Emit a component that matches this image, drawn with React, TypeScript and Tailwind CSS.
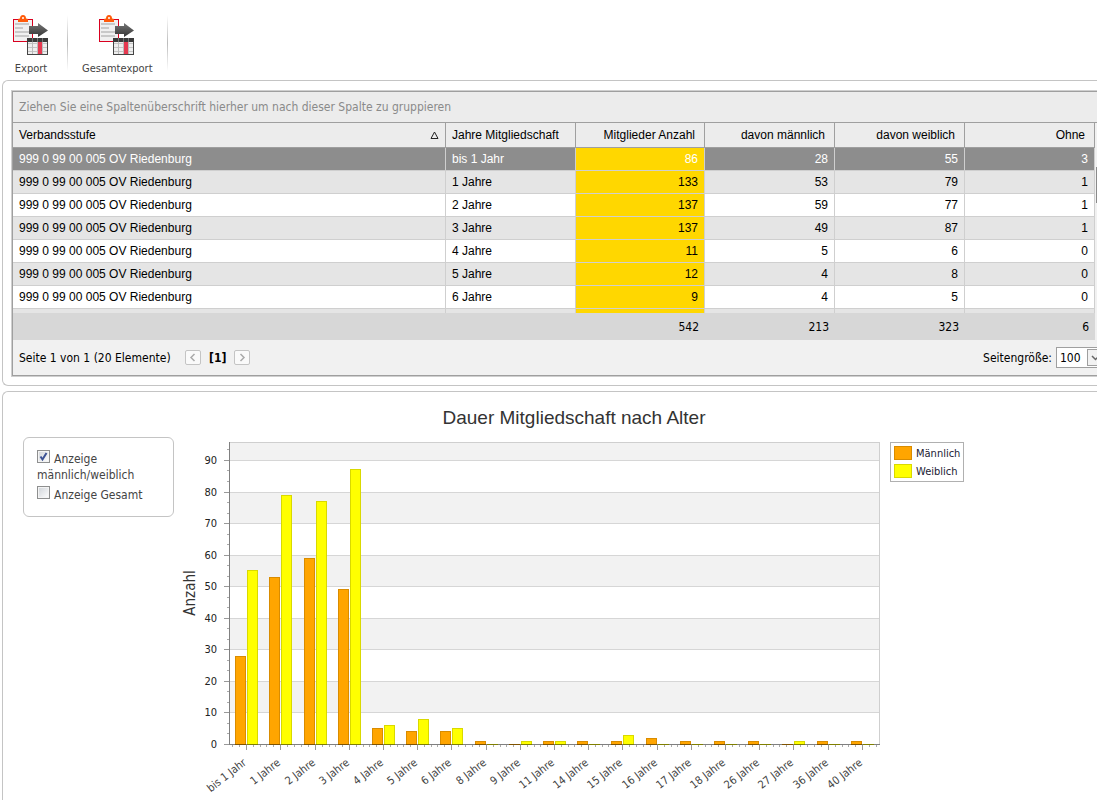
const rows = [
  { label: "bis 1 Jahr", values: [86, 28, 55, 3] },
  { label: "1 Jahre", values: [133, 53, 79, 1] },
  { label: "2 Jahre", values: [137, 59, 77, 1] },
  { label: "3 Jahre", values: [137, 49, 87, 1] },
  { label: "4 Jahre", values: [11, 5, 6, 0] },
  { label: "5 Jahre", values: [12, 4, 8, 0] },
  { label: "6 Jahre", values: [9, 4, 5, 0] },
];

const numberColumns = ["Mitglieder Anzahl", "davon männlich", "davon weiblich", "Ohne"];
const totals = [542, 213, 323, 6];

const chartData = [
  { label: "bis 1 Jahr", m: 28, w: 55 },
  { label: "1 Jahre", m: 53, w: 79 },
  { label: "2 Jahre", m: 59, w: 77 },
  { label: "3 Jahre", m: 49, w: 87 },
  { label: "4 Jahre", m: 5, w: 6 },
  { label: "5 Jahre", m: 4, w: 8 },
  { label: "6 Jahre", m: 4, w: 5 },
  { label: "8 Jahre", m: 1, w: 0 },
  { label: "9 Jahre", m: 0, w: 1 },
  { label: "11 Jahre", m: 1, w: 1 },
  { label: "14 Jahre", m: 1, w: 0 },
  { label: "15 Jahre", m: 1, w: 3 },
  { label: "16 Jahre", m: 2, w: 0 },
  { label: "17 Jahre", m: 1, w: 0 },
  { label: "18 Jahre", m: 1, w: 0 },
  { label: "26 Jahre", m: 1, w: 0 },
  { label: "27 Jahre", m: 0, w: 1 },
  { label: "36 Jahre", m: 1, w: 0 },
  { label: "40 Jahre", m: 1, w: 0 },
];

// plot area inside the chart svg
const left = 49;
const right = 699;
const top = 34;
const bottom = 336;
const step = (right - left) / 19;
const yOf = (value: number) => Math.round(bottom - value * 3.156);
const xOf = (index: number) => Math.round(left + step / 2 + index * step);

function ExportIcon() {
  return (
    <svg width="36" height="41" viewBox="0 0 36 41" aria-hidden="true">
      <defs>
        <linearGradient id="arrow" x1="0" y1="0" x2="0" y2="1">
          <stop offset="0" stopColor="#777" />
          <stop offset="1" stopColor="#333" />
        </linearGradient>
      </defs>
      <rect x="0.5" y="4.5" width="19" height="22" fill="#f0f0f0" stroke="#d9001f" />
      <path d="M2 9h14M2 13h8M2 17h14M2 21h14" stroke="#c9c9c9" strokeWidth="2" />
      <path d="M5 7V4.500q0-1 2-1 0-3.500 3-3.500t3 3.500q2 0 2 1V7z" fill="#ff5a0a" />
      <circle cx="10" cy="3" r="1" fill="#fff" />
      <path d="M16 11h9V8l10 7.500L25 22v-3h-9z" fill="url(#arrow)" />
      <rect x="14.500" y="23.500" width="20" height="16" fill="#eee" stroke="#444" />
      <path d="M15 28.500h19M15 32.500h19M15 36.500h19" stroke="#c4c4c4" />
      <path d="M19.500 24v15M24.500 24v15M29.500 24v15" stroke="#bbb" />
      <rect x="25" y="27" width="4" height="12" fill="#e63950" />
      <path d="M14 25h21" stroke="#3a3a3a" strokeWidth="4" />
      <path d="M19.500 23v4M24.500 23v4M29.500 23v4" stroke="#777" />
    </svg>
  );
}

function ToolbarButton({ label }: { label: string }) {
  return (
    <button type="button" className="flex flex-col items-center gap-[5px] text-[11px] leading-4 text-[#444]">
      <ExportIcon />
      <span>{label}</span>
    </button>
  );
}

function Separator() {
  return <div className="h-14 w-px bg-linear-to-b from-white via-[#bbb] to-white" />;
}

function CheckOption({ label, checked }: { label: string; checked?: boolean }) {
  return (
    <label className="block leading-4">
      <span className="relative mr-1 inline-block size-[13px]">
        <input
          type="checkbox"
          defaultChecked={checked}
          className="peer block size-[13px] appearance-none border border-[#8e8f8f] bg-linear-to-br from-[#cfd3d8] to-white shadow-[inset_0_0_0_1px_#f4f4f4]"
        />
        <svg viewBox="0 0 13 13" className="pointer-events-none absolute inset-0 hidden size-[13px] peer-checked:block">
          <path d="M3.500 6.500 5.500 9.500 9.500 3" fill="none" stroke="#3c5294" strokeWidth="2" />
        </svg>
      </span>
      {label}
    </label>
  );
}

function PagerButton({ label, path }: { label: string; path: string }) {
  return (
    <button
      type="button"
      aria-label={label}
      disabled
      className="flex h-[15px] w-4 items-center justify-center rounded-xs border border-[#c4c4c4] bg-[#fafafa]"
    >
      <svg width="8" height="9" viewBox="0 0 8 9">
        <path d={path} fill="none" stroke="#aaa" strokeWidth="1.500" />
      </svg>
    </button>
  );
}

function MemberTable() {
  return (
    <table className="w-full table-fixed border-separate border-spacing-0 font-['Liberation_Sans',Arial,sans-serif] text-xs text-black">
      <colgroup>
        <col />
        <col className="w-[130px]" />
        <col className="w-[129px]" />
        <col className="w-[130px]" />
        <col className="w-[130px]" />
        <col className="w-[130px]" />
      </colgroup>
      <thead>
        <tr className="h-[25px] bg-[#ececec]">
          <th className="border-r border-b border-[#9f9f9f] px-1.5 py-0 text-left font-normal">
            <span className="flex items-center justify-between">
              Verbandsstufe
              <svg width="9" height="8" viewBox="0 0 9 8" aria-hidden="true">
                <path d="M4.500 1 8 7.500H1z" fill="none" stroke="#222" />
              </svg>
            </span>
          </th>
          <th className="border-r border-b border-[#9f9f9f] px-1.5 py-0 text-left font-normal">Jahre Mitgliedschaft</th>
          {numberColumns.map((name) => (
            <th key={name} className="border-r border-b border-[#9f9f9f] py-0 pr-[9px] text-right font-normal">
              {name}
            </th>
          ))}
        </tr>
      </thead>
      <tbody>
        {rows.map((row, i) => (
          <tr
            key={row.label}
            className={i === 0 ? "h-[23px] bg-[#8d8d8d] text-white" : i % 2 ? "h-[23px] bg-[#e5e5e5]" : "h-[23px] bg-white"}
          >
            <td className="border-r border-b border-[#cfcfcf] px-1.5 py-0">999 0 99 00 005 OV Riedenburg</td>
            <td className="border-r border-b border-[#cfcfcf] px-1.5 py-0">{row.label}</td>
            {row.values.map((value, n) => (
              <td
                key={n}
                className={
                  n === 0
                    ? "border-r border-b border-[#cfcfcf] bg-[#ffd700] px-1.5 py-0 text-right"
                    : "border-r border-b border-[#cfcfcf] px-1.5 py-0 text-right"
                }
              >
                {value}
              </td>
            ))}
          </tr>
        ))}
        <tr className="h-1 bg-[#e5e5e5]" aria-hidden="true">
          <td className="border-r border-[#cfcfcf] p-0" />
          <td className="border-r border-[#cfcfcf] p-0" />
          <td className="border-r border-[#cfcfcf] bg-[#ffd700] p-0" />
          <td className="border-r border-[#cfcfcf] p-0" />
          <td className="border-r border-[#cfcfcf] p-0" />
          <td className="border-r border-[#cfcfcf] p-0" />
        </tr>
      </tbody>
      <tfoot>
        <tr className="h-[27px] bg-[#d7d7d7] font-['DejaVu_Sans_Condensed','DejaVu_Sans',sans-serif]">
          <td className="p-0" />
          <td className="p-0" />
          {totals.map((total) => (
            <td key={total} className="py-0 pr-1.5 text-right">
              {total}
            </td>
          ))}
        </tr>
      </tfoot>
    </table>
  );
}

function Chart() {
  return (
    <svg
      width="790"
      height="393"
      viewBox="0 0 790 393"
      role="img"
      aria-label="Dauer Mitgliedschaft nach Alter"
      className="shrink-0 font-['DejaVu_Sans_Condensed','DejaVu_Sans',sans-serif] text-[11px]"
      shapeRendering="crispEdges"
    >
      <text x="394" y="16" textAnchor="middle" fill="#333" className="font-['Liberation_Sans',Arial,sans-serif] text-[19px]">
        Dauer Mitgliedschaft nach Alter
      </text>
      <text transform="translate(15 185) rotate(-90)" textAnchor="middle" fill="#333" className="text-[15px]">
        Anzahl
      </text>

      <rect x={left} y={top} width={right - left} height={yOf(90) - top} fill="#f2f2f2" />
      {[80, 60, 40, 20].map((v) => (
        <rect key={v} x={left} y={yOf(v)} width={right - left} height={yOf(v - 10) - yOf(v)} fill="#f2f2f2" />
      ))}
      {[10, 20, 30, 40, 50, 60, 70, 80, 90].map((v) => (
        <rect key={v} x={left} y={yOf(v)} width={right - left} height="1" fill="#d6d6d6" />
      ))}
      <path d={`M${left} ${top + 0.5}H${right + 0.5}V${bottom}`} fill="none" stroke="#cfcfcf" />

      {chartData.map((d, i) => {
        const x = xOf(i);
        return (
          <g key={d.label}>
            {d.m > 0 && (
              <rect x={x - 10.5} y={yOf(d.m) + 0.5} width="10" height={bottom - yOf(d.m)} fill="#ffa500" stroke="#d98c00" />
            )}
            {d.w > 0 && (
              <rect x={x + 1.5} y={yOf(d.w) + 0.5} width="10" height={bottom - yOf(d.w)} fill="#ffff00" stroke="#d9d900" />
            )}
          </g>
        );
      })}

      <rect x={left} y={top} width="1" height={bottom - top + 1} fill="#808080" />
      <rect x={left} y={bottom} width={right - left + 1} height="1" fill="#808080" />
      {chartData.map((d, i) => (
        <g key={d.label}>
          <rect x={xOf(i) - 11} y={bottom} width="11" height="1" fill="#805300" />
          <rect x={xOf(i) + 1} y={bottom} width="11" height="1" fill="#808000" />
          <rect x={xOf(i)} y={bottom + 1} width="1" height="5" fill="#999" />
          {[-2, -1, 1, 2].map((n) => (
            <rect key={n} x={xOf(i) + n * 7} y={bottom + 1} width="1" height="2" fill="#aaa" />
          ))}
          <text transform={`translate(${xOf(i) + 1} 356) rotate(-38)`} textAnchor="end" fill="#444">
            {d.label}
          </text>
        </g>
      ))}
      {[0, 10, 20, 30, 40, 50, 60, 70, 80, 90].map((v) => (
        <g key={v}>
          <rect x={left - 5} y={yOf(v)} width="5" height="1" fill="#999" />
          <rect x={left - 2} y={yOf(v + 3.33)} width="2" height="1" fill="#aaa" />
          {v < 90 && <rect x={left - 2} y={yOf(v + 6.67)} width="2" height="1" fill="#aaa" />}
          <text x="37" y={yOf(v) + 4} textAnchor="end" fill="#222">
            {v}
          </text>
        </g>
      ))}

      <rect x="710.500" y="34.500" width="73" height="39" fill="#fff" stroke="#b0b0b0" />
      <rect x="714.500" y="38.500" width="17" height="13" fill="#ffa500" stroke="#d98c00" />
      <rect x="714.500" y="56.500" width="17" height="13" fill="#ffff00" stroke="#d9d900" />
      <text x="736" y="49" fill="#1a1a33">
        Männlich
      </text>
      <text x="736" y="67" fill="#1a1a33">
        Weiblich
      </text>
    </svg>
  );
}

export default function App() {
  return (
    <main className="overflow-hidden bg-white pl-0.5 font-['DejaVu_Sans_Condensed','DejaVu_Sans',sans-serif] text-xs text-black">
      <header className="flex h-20 items-start gap-3.5 pt-[15px] pl-[11px]">
        <ToolbarButton label="Export" />
        <div className="ml-1">
          <Separator />
        </div>
        <ToolbarButton label="Gesamtexport" />
        <Separator />
      </header>

      <section className="rounded-l-md border border-r-0 border-[#c4c4c4] pt-[9px] pb-2 pl-2">
        <div className="border border-r-0 border-[#cfcfcf]">
          <div className="border border-r-0 border-[#9f9f9f] bg-[#f1f1f1]">
            <p className="h-[31px] border-b border-[#9f9f9f] bg-[#ececec] pl-1.5 leading-[30px] text-[#8a8a8a]">
              Ziehen Sie eine Spaltenüberschrift hierher um nach dieser Spalte zu gruppieren
            </p>
            <div className="flex">
              <div className="min-w-0 grow">
                <MemberTable />
              </div>
              <div className="w-0.5 shrink-0 bg-[#f1f1f1] pt-11 pl-px">
                <div className="h-9 bg-[#8a8a8a]" />
              </div>
            </div>
            <div className="flex h-[35px] items-center gap-2 overflow-hidden pl-1.5">
              <span className="w-[158px]">Seite 1 von 1 (20 Elemente)</span>
              <PagerButton label="Vorherige Seite" path="M5.500 1 2 4.500 5.500 8" />
              <b>[1]</b>
              <PagerButton label="Nächste Seite" path="M2.500 1 6 4.500 2.500 8" />
              <label htmlFor="page-size" className="ml-auto -mr-1">
                Seitengröße:
              </label>
              <div className="relative -mr-[7px]">
                <select
                  id="page-size"
                  defaultValue="100"
                  className="block h-[21px] w-12 appearance-none border border-[#9f9f9f] bg-white pl-[3px] text-xs"
                >
                  <option>100</option>
                </select>
                <svg width="17" height="17" viewBox="0 0 17 17" className="pointer-events-none absolute top-0.5 right-0">
                  <rect x="0.500" y="0.500" width="16" height="16" fill="#f2f2f2" stroke="#9f9f9f" />
                  <path d="M5 7l3.500 3.500L12 7" fill="none" stroke="#666" strokeWidth="1.500" />
                </svg>
              </div>
            </div>
          </div>
        </div>
      </section>

      <section className="mt-[5px] flex items-start rounded-tl-md border-t border-l border-[#c4c4c4] pt-4 pl-5">
        <fieldset className="mt-[29px] mr-1.5 h-20 w-[151px] shrink-0 space-y-[3px] rounded-md border border-[#c4c4c4] pt-3 pl-[13px] text-[#444]">
          <CheckOption label="Anzeige männlich/weiblich" checked />
          <CheckOption label="Anzeige Gesamt" />
        </fieldset>
        <Chart />
      </section>
    </main>
  );
}
